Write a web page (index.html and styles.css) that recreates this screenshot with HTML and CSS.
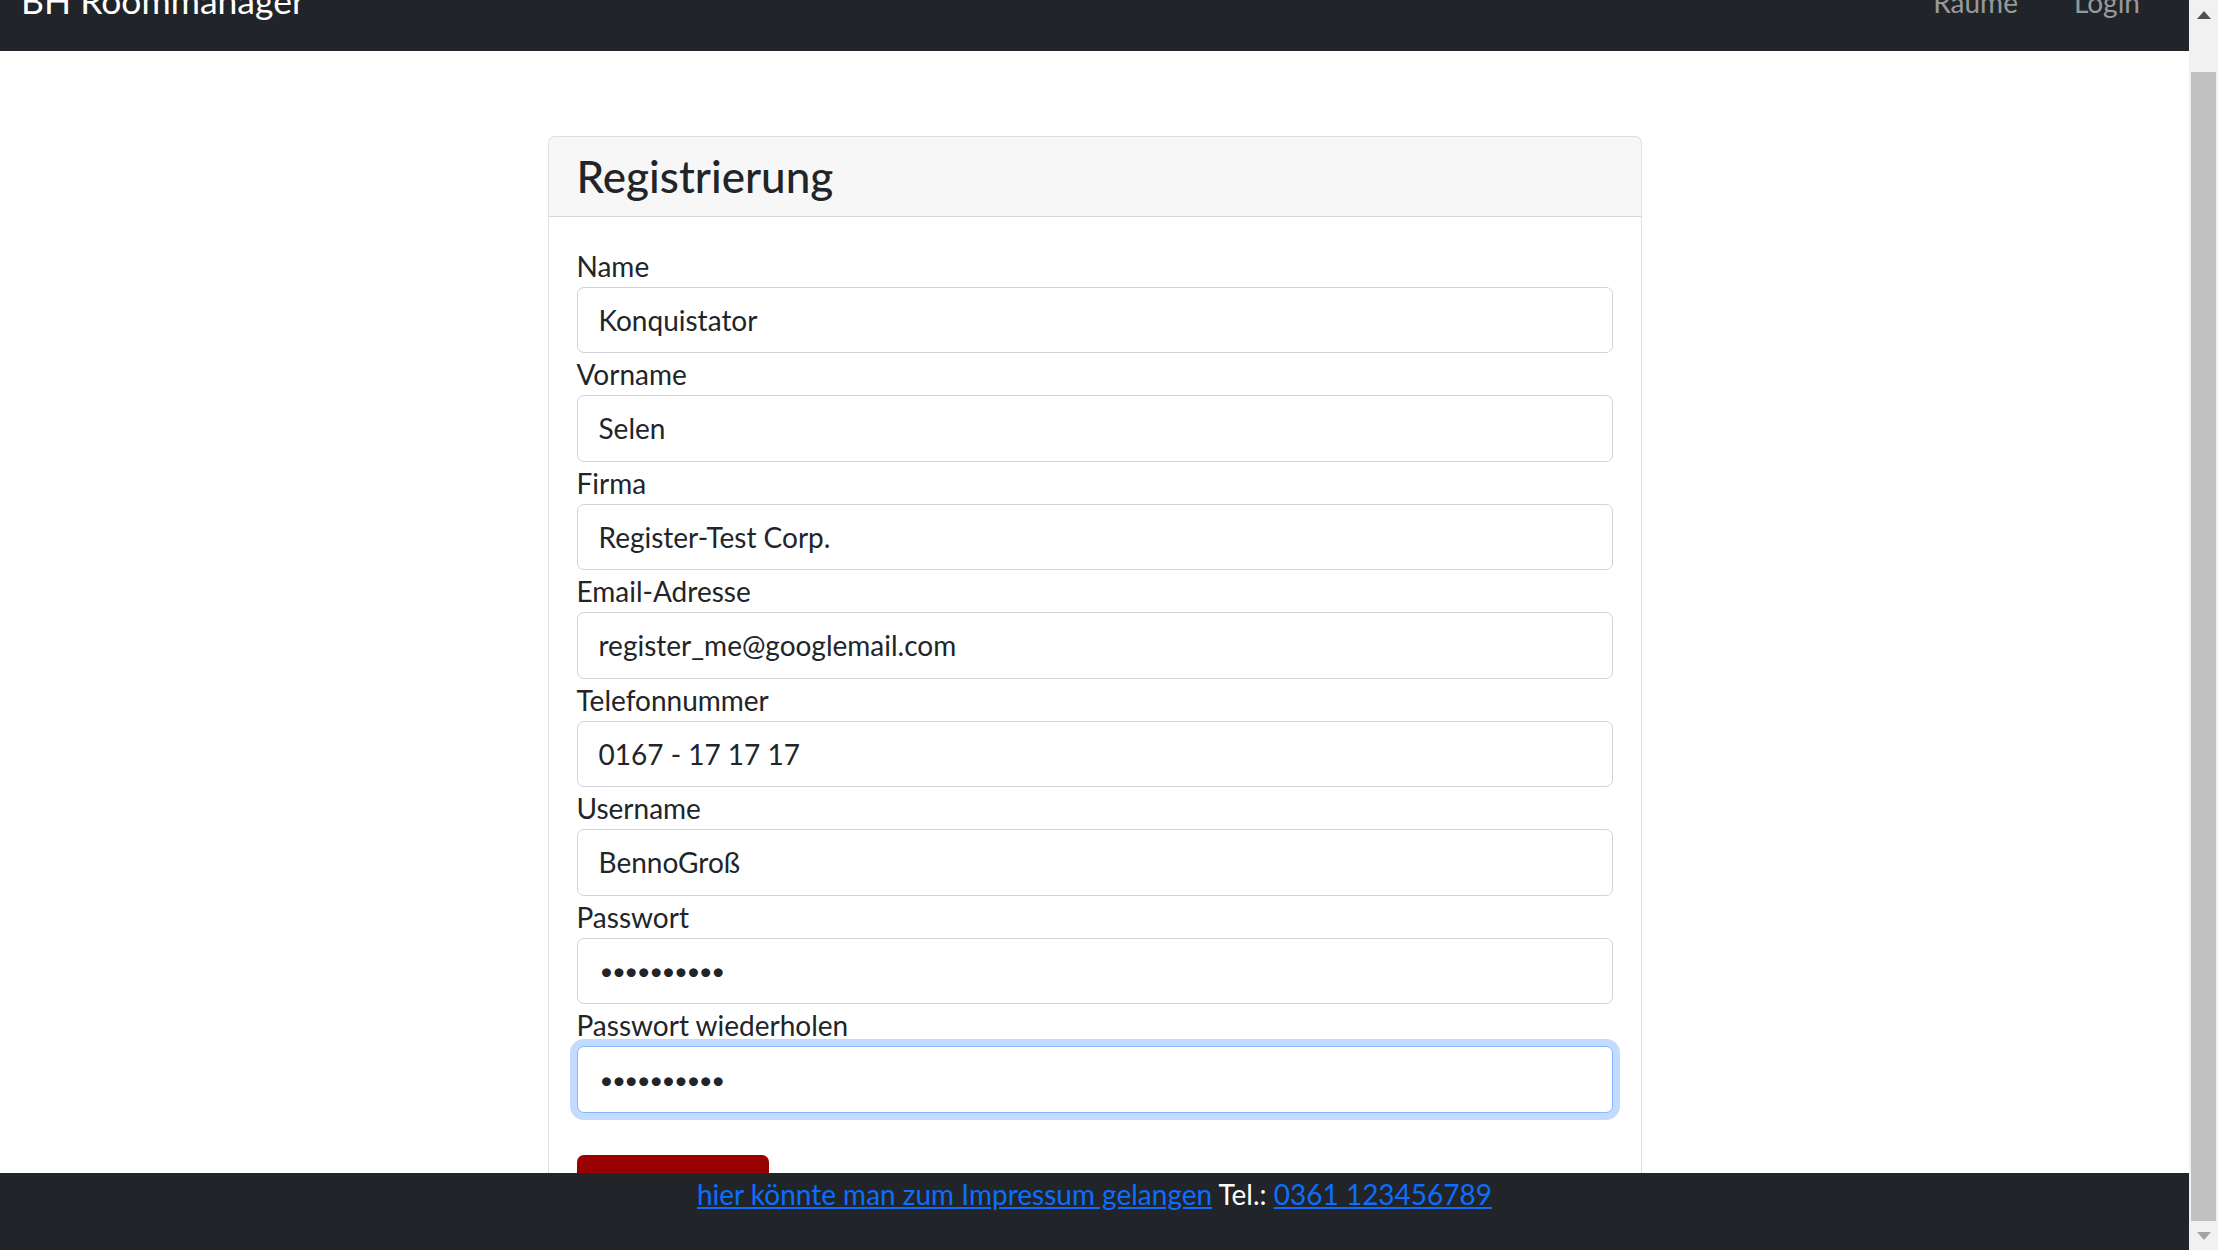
FILE: index.html
```html
<!DOCTYPE html>
<html lang="de">
<head>
<meta charset="utf-8">
<title>BH Roommanager – Registrierung</title>
<link rel="stylesheet" href="styles.css">
</head>
<body>
<div class="viewport">
  <div class="page">
    <nav class="navbar">
      <a class="brand" href="#">BH Roommanager</a>
      <ul class="nav">
        <li><a class="nav-link" href="#">Räume</a></li>
        <li><a class="nav-link" href="#">Login</a></li>
      </ul>
    </nav>
    <main class="main">
      <div class="card">
        <div class="card-header">
          <h4 class="card-title">Registrierung</h4>
        </div>
        <form class="card-body">
          <label class="label" for="name">Name</label>
          <input class="control" id="name" type="text" value="Konquistator">
          <label class="label" for="vorname">Vorname</label>
          <input class="control" id="vorname" type="text" value="Selen">
          <label class="label" for="firma">Firma</label>
          <input class="control" id="firma" type="text" value="Register-Test Corp.">
          <label class="label" for="email">Email-Adresse</label>
          <input class="control" id="email" type="email" value="register_me@googlemail.com">
          <label class="label" for="tel">Telefonnummer</label>
          <input class="control" id="tel" type="text" value="0167 - 17 17 17">
          <label class="label" for="user">Username</label>
          <input class="control" id="user" type="text" value="BennoGroß">
          <label class="label" for="pw">Passwort</label>
          <input class="control pw" id="pw" type="text" value="••••••••••">
          <label class="label" for="pw2">Passwort wiederholen</label>
          <input class="control pw focused" id="pw2" type="text" value="••••••••••">
          <div class="actions">
            <button class="btn-submit" type="button"><span class="btn-label">Registrieren</span></button>
          </div>
        </form>
      </div>
    </main>
    <footer class="footer">
      <a href="#">hier könnte man zum Impressum gelangen</a> Tel.: <a href="#">0361 123456789</a>
    </footer>
  </div>
  <div class="scrollbar">
    <div class="sb-btn">
      <svg width="14" height="8" viewBox="0 0 14 8"><path d="M0 8 L7 0 L14 8 Z" fill="#505050"/></svg>
    </div>
    <div class="sb-gap"></div>
    <div class="sb-thumb"></div>
    <div class="sb-btn">
      <svg width="14" height="8" viewBox="0 0 14 8"><path d="M0 0 L14 0 L7 8 Z" fill="#a3a3a3"/></svg>
    </div>
  </div>
</div>
</body>
</html>
```

FILE: styles.css
```css
* { box-sizing: border-box; }

html, body {
  margin: 0;
  padding: 0;
  height: 100%;
}

body {
  font-family: Lato, "Open Sans", "Noto Sans", sans-serif;
  font-size: 28px;
  line-height: 1.5;
  color: #212529;
  background: #fff;
  overflow: hidden;
}

.viewport {
  display: grid;
  grid-template-columns: 1fr 29px;
  height: 1250px;
  width: 2218px;
}

.page {
  display: flex;
  flex-direction: column;
  min-width: 0;
  height: 1250px;
}

/* navbar */
.navbar {
  flex: 0 0 51px;
  height: 51px;
  background: #212529;
  display: flex;
  justify-content: space-between;
  align-items: flex-start;
  padding: 0 21px;
  overflow: hidden;
}

.brand {
  color: #fff;
  text-decoration: none;
  font-size: 35.5px;
  line-height: 52px;
  margin-top: -25px;
  white-space: nowrap;
}

.nav {
  list-style: none;
  margin: -19px 0 0;
  padding: 0;
  display: flex;
}

.nav-link {
  display: block;
  padding: 0 28px;
  color: rgba(255, 255, 255, 0.55);
  text-decoration: none;
  line-height: 42px;
}

/* main */
.main {
  flex: 1 1 auto;
  overflow: hidden;
  padding-top: 85px;
}

.card {
  width: 1094px;
  margin: 0 auto;
  border: 1px solid rgba(0, 0, 0, 0.125);
  border-radius: 7px;
  background: #fff;
}

.card-header {
  background: rgba(0, 0, 0, 0.03);
  border-bottom: 1px solid rgba(0, 0, 0, 0.125);
  padding: 14px 28px;
  border-radius: 6px 6px 0 0;
}

.card-title {
  margin: 0;
  font-size: 44px;
  font-weight: 500;
  line-height: 50.5px;
}

.card-body {
  padding: 28px;
  display: flex;
  flex-direction: column;
}

.label {
  display: block;
  line-height: 42px;
}

.control {
  display: block;
  width: 100%;
  height: 66.5px;
  padding: 0 21px;
  font: inherit;
  color: #212529;
  background: #fff;
  border: 1px solid #ced4da;
  border-radius: 7px;
  outline: none;
}

.control.pw {
  font-size: 24px;
  letter-spacing: -1.5px;
  padding-left: 22px;
}

.control.focused {
  border-color: #86b7fe;
  box-shadow: 0 0 0 7px rgba(13, 110, 253, 0.25);
}

.actions {
  padding-top: 42px;
  height: 84px;
}

.btn-submit {
  display: block;
  width: 192px;
  height: 66.5px;
  border: 0;
  border-radius: 7px;
  background: #990000;
  color: #fff;
  font: inherit;
  padding: 0;
}

.btn-label {
  display: block;
  padding-top: 40px;
}

/* footer */
.footer {
  flex: 0 0 77px;
  background: #212529;
  color: #fff;
  text-align: center;
  line-height: 42px;
}

.footer a {
  color: #0d6efd;
  text-decoration: underline;
}

/* scrollbar */
.scrollbar {
  display: flex;
  flex-direction: column;
  background: #f1f1f1;
  height: 1250px;
}

.sb-btn {
  flex: 0 0 29px;
  display: flex;
  align-items: center;
  justify-content: center;
}

.sb-gap {
  flex: 0 0 43px;
}

.sb-thumb {
  flex: 1 1 auto;
  margin: 0 2px;
  background: #c1c1c1;
}
```
